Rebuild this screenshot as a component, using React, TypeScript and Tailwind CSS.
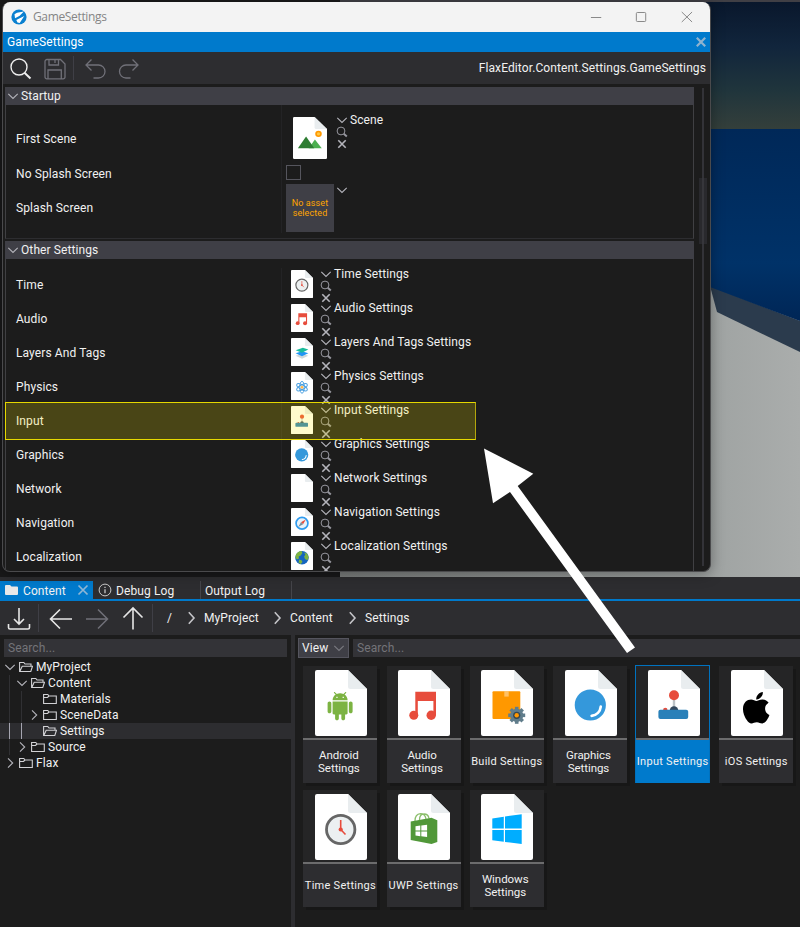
import React from "react";
import { FaApple } from "react-icons/fa";

type Kind =
  | "android" | "audio" | "build" | "graphics" | "input" | "ios" | "time" | "uwp" | "windows"
  | "layers" | "physics" | "network" | "navigation" | "localization" | "scene";

function Glyph({ kind }: { kind: Kind }) {
  switch (kind) {
    case "android":
      return (
        <path
          transform="translate(10.1 22) scale(1.25 1.18)"
          fill="#7cb342"
          d="M6 18c0 .55.45 1 1 1h1v3.5c0 .83.67 1.5 1.5 1.5s1.5-.67 1.5-1.5V19h2v3.5c0 .83.67 1.5 1.5 1.5s1.5-.67 1.5-1.5V19h1c.55 0 1-.45 1-1V8H6v10zM3.5 8C2.67 8 2 8.67 2 9.5v7c0 .83.67 1.5 1.5 1.5S5 17.33 5 16.5v-7C5 8.67 4.33 8 3.5 8zm17 0c-.83 0-1.5.67-1.5 1.5v7c0 .83.67 1.5 1.5 1.5s1.5-.67 1.5-1.5v-7c0-.83-.67-1.5-1.5-1.5zm-4.97-5.84l1.3-1.3c.2-.2.2-.51 0-.71-.2-.2-.51-.2-.71 0l-1.48 1.48C13.85 1.23 12.95 1 12 1c-.96 0-1.86.23-2.66.63L7.85.15c-.2-.2-.51-.2-.71 0-.2.2-.2.51 0 .71l1.31 1.31C6.97 3.26 6 5.01 6 7h12c0-1.99-.97-3.75-2.47-4.84zM10 5H9V4h1v1zm5 0h-1V4h1v1z"
        />
      );
    case "audio":
      return (
        <g fill="#e74c3c">
          <path d="M17.3 21.7H38V45h-2.6V31H19.8v14h-2.5z" />
          <circle cx="15.8" cy="45.2" r="4.5" />
          <circle cx="33.2" cy="45.2" r="4.7" />
        </g>
      );
    case "build":
      return (
        <g>
          <rect x="11.5" y="21.2" width="27.8" height="27.8" rx="1" fill="#ff9800" />
          <rect x="23.3" y="21.2" width="4.4" height="5.4" fill="#ffcc80" opacity=".8" />
          <g fill="#607d8b">
            <circle cx="35.7" cy="45.3" r="6.6" />
            <rect x="33.9" y="36.8" width="3.6" height="17" />
            <rect x="33.9" y="36.8" width="3.6" height="17" transform="rotate(45 35.7 45.3)" />
            <rect x="33.9" y="36.8" width="3.6" height="17" transform="rotate(90 35.7 45.3)" />
            <rect x="33.9" y="36.8" width="3.6" height="17" transform="rotate(135 35.7 45.3)" />
          </g>
          <circle cx="35.7" cy="45.3" r="3.6" fill="#37474f" />
          <circle cx="35.7" cy="45.3" r="2.2" fill="#ff9800" />
        </g>
      );
    case "graphics":
      return (
        <g>
          <circle cx="25.3" cy="35" r="15.6" fill="#3498db" />
          <path d="M35.8 36.500c-.6 5-4 8.800-9.200 9.400" fill="none" stroke="#fff" strokeWidth="2.600" strokeLinecap="round" />
        </g>
      );
    case "input":
      return (
        <g>
          <rect x="24.8" y="28" width="2.400" height="10" fill="#bdc3c7" />
          <circle cx="26" cy="25.2" r="5" fill="#e74c3c" />
          <circle cx="17.300" cy="40" r="2.200" fill="#e74c3c" />
          <circle cx="26" cy="40.500" r="4.300" fill="#34495e" />
          <rect x="10.400" y="39.700" width="29.800" height="9.400" rx="2" fill="#2980b9" />
        </g>
      );
    case "ios":
      return <FaApple x={7.200} y={19.700} size={36} color="#000" />;
    case "time":
      return (
        <g>
          <circle cx="25.700" cy="35.500" r="14.200" fill="#ecf0f1" stroke="#666" strokeWidth="2.800" />
          <path d="M25.700 26v9.500l4.800 5" fill="none" stroke="#e74c3c" strokeWidth="1.600" />
          <circle cx="25.700" cy="35.500" r="2.100" fill="#e74c3c" />
        </g>
      );
    case "uwp":
      return (
        <g>
          <path d="M17 27c0-4 2-7 5.500-7.300 3 0 5 2.300 5.500 5.300M21.500 26c0-4 2-6 4.500-6 3 0 4.600 1.700 5 4.500" fill="none" stroke="#8bbf6c" strokeWidth="1.300" />
          <path d="M12.700 27.500 33.500 23.700l5.800 2.500V48L33.500 50 12.700 46z" fill="#519839" />
          <path d="M17.500 32.300l4.800-.7v4.800h-4.800zM23.300 31.500l5.800-.8v5.700h-5.800zM17.500 37.400h4.800v4.800l-4.800-.700zM23.300 37.400h5.800v5.700l-5.800-.800z" fill="#fff" />
        </g>
      );
    case "windows":
      return (
        <path fill="#00adff" d="M11.300 24.400 22.800 22.700V34.600H11.300zM24 22.500 40.700 20.200V34.600H24zM11.300 36H22.800V47.800L11.300 46.200zM24 36H40.700V50L24 48z" />
      );
    case "layers":
      return (
        <g>
          <path d="M11 42l15-5 15 5-15 7z" fill="#cfd8dc" />
          <path d="M11 36l15-5 15 5-15 7z" fill="#2196f3" />
          <path d="M11 29l17-6 13 4-15 8z" fill="#1abc9c" />
        </g>
      );
    case "physics":
      return (
        <g fill="none" stroke="#4a9fe0" strokeWidth="2.300">
          <ellipse cx="26" cy="36" rx="5.500" ry="14" />
          <ellipse cx="26" cy="36" rx="5.500" ry="14" transform="rotate(60 26 36)" />
          <ellipse cx="26" cy="36" rx="5.500" ry="14" transform="rotate(120 26 36)" />
          <circle cx="26" cy="36" r="2.500" fill="#ffb74d" stroke="#ffb74d" />
        </g>
      );
    case "navigation":
      return (
        <g>
          <circle cx="26" cy="36" r="14" fill="#e8f2fa" stroke="#2f9cf0" strokeWidth="4" />
          <path d="M35 27 28.500 38.500 23.500 33.500z" fill="#e74c3c" />
          <path d="M17 45 28.500 38.500 23.500 33.500z" fill="#78909c" />
        </g>
      );
    case "localization":
      return (
        <g>
          <circle cx="26" cy="37" r="16" fill="#1565c0" />
          <path d="M12 29c3-5 7-8 13-8l2 5-4 6-5 2 1 5-5 2-4-5zM31 25l7 2 4 9-3 7-6-3-2-6 3-4zM19 41l6 2 2 4-4 5-5-3z" fill="#7cb342" />
        </g>
      );
    case "scene":
      return (
        <g>
          <circle cx="39" cy="26.500" r="5" fill="#ff9800" />
          <circle cx="39" cy="26.500" r="2.500" fill="#ffc947" />
          <path d="M24 49 33.500 35.500 44 49z" fill="#4caf50" />
          <path d="M7.500 49 20 30.500 32.500 49z" fill="#2e7d32" />
        </g>
      );
    default:
      return null;
  }
}

function FileIcon({ kind, className }: { kind: Kind; className: string }) {
  return (
    <svg viewBox="0 0 52 66" className={className} preserveAspectRatio="none">
      <path d="M2 0H33L52 19V64a2 2 0 0 1-2 2H2a2 2 0 0 1-2-2V2a2 2 0 0 1 2-2z" fill="#fff" />
      <path d="M33 0 52 19H35.500a2.500 2.500 0 0 1-2.500-2.500z" fill="#e9edef" />
      <Glyph kind={kind} />
    </svg>
  );
}

function Down({ className = "" }: { className?: string }) {
  return (
    <svg viewBox="0 0 12 12" className={`h-3 w-3 shrink-0 ${className}`} fill="none" stroke="#b4b4bb" strokeWidth="1.1">
      <path d="M1.300 3.800 6 8.500l4.700-4.700" />
    </svg>
  );
}

function Right() {
  return (
    <svg viewBox="0 0 12 12" className="h-3 w-3 shrink-0" fill="none" stroke="#b4b4bb" strokeWidth="1.1">
      <path d="M4 1.300 8.700 6 4 10.700" />
    </svg>
  );
}

function Tools({ only = false }: { only?: boolean }) {
  return (
    <div className="flex w-3 shrink-0 flex-col">
      <Down />
      {!only && (
        <>
          <svg viewBox="0 0 12 12" className="h-3 w-3 shrink-0" fill="none" stroke="#96969e">
            <circle cx="5" cy="5" r="3.900" strokeWidth="1" />
            <path d="M7.800 7.800 10.800 10.500" strokeWidth="1.900" />
          </svg>
          <svg viewBox="0 0 12 12" className="h-3 w-3 shrink-0" fill="none" stroke="#b4b4bb" strokeWidth="1.600">
            <path d="M2.300 2.300l7.400 7.400M9.700 2.300 2.300 9.700" />
          </svg>
        </>
      )}
    </div>
  );
}

function GroupHeader({ title }: { title: string }) {
  return (
    <div className="flex h-[18px] items-center gap-[2px] bg-[#3f3f46] pl-0.5">
      <Down />
      <span>{title}</span>
    </div>
  );
}

const settings: { label: string; asset: string; kind: Kind }[] = [
  { label: "Time", asset: "Time Settings", kind: "time" },
  { label: "Audio", asset: "Audio Settings", kind: "audio" },
  { label: "Layers And Tags", asset: "Layers And Tags Settings", kind: "layers" },
  { label: "Physics", asset: "Physics Settings", kind: "physics" },
  { label: "Input", asset: "Input Settings", kind: "input" },
  { label: "Graphics", asset: "Graphics Settings", kind: "graphics" },
  { label: "Network", asset: "Network Settings", kind: "network" },
  { label: "Navigation", asset: "Navigation Settings", kind: "navigation" },
  { label: "Localization", asset: "Localization Settings", kind: "localization" },
];

function Highlight() {
  return (
    <div className="absolute -left-px -top-px z-10 h-[38px] w-[471px] border border-[#e6d800] border-r-[#b3a60c] bg-[#ffeb00]/20" />
  );
}

function SettingsWindow() {
  return (
    <div className="absolute left-[2px] top-[2px] flex h-[570px] w-[709px] flex-col overflow-hidden rounded-lg border border-t-0 border-[#4a4a4c] bg-[#1c1c1c] shadow-[0_2px_14px_rgba(0,0,0,0.35)]">
      <div className="flex h-[30px] shrink-0 items-center bg-[#f3f3f3] pl-2">
        <svg viewBox="0 0 16 16" className="mb-px h-4 w-4">
          <circle cx="8" cy="8" r="7.600" fill="#0a80d0" />
          <path d="M3.500 5.200 6 3.800 12.800 2.500 8.700 6.800 4 9.300zM5.300 11 13.300 6.900 8.700 13.900 6.500 13.400z" fill="#fff" />
        </svg>
        <span className="ml-1.5 font-['Open_Sans',sans-serif] text-[12px] tracking-[-0.35px] text-[#858585]">GameSettings</span>
        <svg viewBox="0 0 110 12" className="ml-auto mr-[17px] h-3 w-[103px]" preserveAspectRatio="none" fill="none" stroke="#858585">
          <path d="M1 6.500H12" />
          <rect x="49.500" y="1.500" width="10" height="9" rx="1" />
          <path d="M98 1l11 10M109 1 98 11" />
        </svg>
      </div>
      <div className="flex h-5 shrink-0 items-center justify-between bg-[#007acc] pl-1 pr-[3px] text-white">
        <span>GameSettings</span>
        <svg viewBox="0 0 12 12" className="h-3 w-3" stroke="#8fb3cf" strokeWidth="2.200">
          <path d="M1.800 1.800l8.400 8.400M10.200 1.800 1.800 10.200" />
        </svg>
      </div>
      <div className="flex h-8 shrink-0 items-center bg-[#2d2d30] pl-1.5 pr-1">
        <svg viewBox="0 0 24 24" className="h-6 w-6" fill="none" stroke="#eee" strokeWidth="1.400">
          <circle cx="10" cy="11" r="8" />
          <path d="M15.500 16.800 21.500 22.500" strokeWidth="2" />
        </svg>
        <svg viewBox="0 0 24 24" className="ml-2.5 h-6 w-6" fill="none" stroke="#707078" strokeWidth="1.300">
          <path d="M4 3.500H17.500L22 8V21a1.800 1.800 0 0 1-1.800 1.800H3.800A1.800 1.800 0 0 1 2 21V5.500a2 2 0 0 1 2-2zM6 3.500V9H15.500V3.500M5 22.500V14H18.300V22.500" />
          <path d="M12 3.500V7" />
        </svg>
        <div className="ml-1.5 h-6 w-px bg-[#3f3f46]" />
        <svg viewBox="0 0 24 24" className="ml-2.5 h-6 w-6" fill="none" stroke="#707078" strokeWidth="1.300">
          <path d="M7.500 3.500 2 9 7.500 14.500M2.500 9H14.500a6.500 6.500 0 0 1 0 13H9.500" />
        </svg>
        <svg viewBox="0 0 24 24" className="ml-2.5 h-6 w-6" fill="none" stroke="#707078" strokeWidth="1.300">
          <path d="M14.500 3.500 20 9 14.500 14.500M19.500 9H8a6.500 6.500 0 0 0 0 13h4.500" />
        </svg>
        <span className="ml-auto">FlaxEditor.Content.Settings.GameSettings</span>
      </div>
      <div className="flex min-h-0 flex-1">
        <div className="ml-0.5 w-[689px] pt-[3px]">
          <GroupHeader title="Startup" />
          <div className="flex h-[134px] border border-t-0 border-[#404043] border-b-[#2d2d30]">
            <div className="flex h-[128px] w-[276px] flex-col border-r border-[#232325] pl-2.5">
              <span className="mt-[25px] leading-[18px]">First Scene</span>
              <span className="mt-[17px] leading-[18px]">No Splash Screen</span>
              <span className="mt-4 leading-[18px]">Splash Screen</span>
            </div>
            <div className="pl-1">
              <div className="flex h-[58px] pt-[9px]">
                <FileIcon kind="scene" className="ml-[7px] mt-[3px] h-[42px] w-[34px]" />
                <div className="ml-[9px] flex">
                  <Tools />
                  <span className="ml-0.5 h-[11px] leading-[12px]">Scene</span>
                </div>
              </div>
              <div className="mt-[2px] h-[15px] w-[15px] border border-[#55555d]" />
              <div className="mt-1 flex">
                <div className="flex h-12 w-12 items-center justify-center bg-[#3f3f46] text-center text-[9px] leading-[10px] tracking-[0.1px] text-[#ffa500]">
                  No asset<br />selected
                </div>
                <div className="ml-[2px]"><Tools only /></div>
              </div>
            </div>
          </div>
          <div className="h-0.5" />
          <GroupHeader title="Other Settings" />
          <div className="h-[330px] border-x border-[#404043] pt-[9px]">
            {settings.map((s) => (
              <div key={s.label} className="relative flex h-[34px]">
                {s.label === "Input" && (
                  <div className="absolute -top-px left-0"><Highlight /></div>
                )}
                <div className="flex w-[276px] items-center border-r border-[#232325] pl-2.5">{s.label}</div>
                <FileIcon kind={s.kind} className="ml-[9px] mt-[2px] h-7 w-[22px]" />
                <div className="ml-[7px] flex">
                  <Tools />
                  <span className="ml-0.5 leading-[12px]">{s.asset}</span>
                </div>
              </div>
            ))}
          </div>
        </div>
        <div className="ml-[5px] flex w-2 flex-col items-center pt-1">
          <div className="h-[90px] w-0.5 bg-[#333338]" />
          <div className="flex h-[66px] w-2 justify-center bg-[#29292d]"><div className="h-full w-0.5 bg-[#36363b]" /></div>
          <div className="h-[322px] w-0.5 bg-[#333338]" />
        </div>
      </div>
    </div>
  );
}

function Viewport() {
  return (
    <svg viewBox="0 0 460 577" className="ml-[340px] h-[577px] w-[460px]">
      <defs>
        <linearGradient id="sky" x1="0" y1="0" x2="0" y2="1">
          <stop offset="0" stopColor="#09172c" />
          <stop offset=".35" stopColor="#11253c" />
          <stop offset=".7" stopColor="#20353c" />
          <stop offset="1" stopColor="#343f3b" />
        </linearGradient>
        <linearGradient id="wall" x1="0" y1="0" x2="0" y2="1">
          <stop offset="0" stopColor="#002858" />
          <stop offset=".7" stopColor="#003268" />
          <stop offset="1" stopColor="#002656" />
        </linearGradient>
        <linearGradient id="floor" x1="0" y1="0" x2="1" y2="0">
          <stop offset="0" stopColor="#7b7e7d" />
          <stop offset=".8" stopColor="#9fa3a2" />
          <stop offset="1" stopColor="#aaadac" />
        </linearGradient>
      </defs>
      <rect width="460" height="577" fill="url(#floor)" />
      <rect width="460" height="2" fill="#403f45" />
      <rect x="350" y="2" width="110" height="127" fill="url(#sky)" />
      <path d="M370 286 460 321V352L377 312z" fill="#2b3b4d" />
      <path d="M360 129H460V321L370 287z" fill="url(#wall)" />
    </svg>
  );
}

function Folder({ open = false }: { open?: boolean }) {
  return (
    <svg viewBox="0 0 14 12" className="h-3 w-3.5 shrink-0" fill="none" stroke="#d2d2d5" strokeWidth="1.100">
      {open ? (
        <path d="M.6 10.500V1.500H4.800L6 3H12V5.200M.8 10.500 3.200 5.200H13.500L11.800 10.500z" />
      ) : (
        <path d="M.6 10.500V1.500H4.800L6 3H13.300V10.500zM.6 4.500H4.500L6 3" />
      )}
    </svg>
  );
}

const tree: { name: string; pad: string; arrow?: "down" | "right"; open?: boolean; guides: number }[] = [
  { name: "MyProject", pad: "pl-1", arrow: "down", open: true, guides: 0 },
  { name: "Content", pad: "pl-4", arrow: "down", open: true, guides: 1 },
  { name: "Materials", pad: "pl-7", guides: 2 },
  { name: "SceneData", pad: "pl-7", arrow: "right", guides: 2 },
  { name: "Settings", pad: "pl-7", open: true, guides: 2 },
  { name: "Source", pad: "pl-4", arrow: "right", guides: 1 },
  { name: "Flax", pad: "pl-1", arrow: "right", guides: 0 },
];

const assets: { name: string; kind: Kind; wrap?: boolean }[] = [
  { name: "Android Settings", kind: "android", wrap: true },
  { name: "Audio Settings", kind: "audio", wrap: true },
  { name: "Build Settings", kind: "build" },
  { name: "Graphics Settings", kind: "graphics", wrap: true },
  { name: "Input Settings", kind: "input" },
  { name: "iOS Settings", kind: "ios" },
  { name: "Time Settings", kind: "time" },
  { name: "UWP Settings", kind: "uwp" },
  { name: "Windows Settings", kind: "windows", wrap: true },
];

function Tile({ name, kind, wrap }: { name: string; kind: Kind; wrap?: boolean }) {
  const selected = kind === "input";
  return (
    <div
      className={
        selected
          ? "-ml-px -mt-px flex h-[118px] w-[75px] flex-col bg-[#0072bf] px-px pt-px"
          : "flex h-[117px] w-[74px] flex-col bg-[#252526] shadow-[3px_3px_0_#171717]"
      }
    >
      <div className="flex h-[72px] shrink-0 bg-[#252526] pt-1">
        <FileIcon kind={kind} className="ml-[11.600px] h-[66px] w-[52px] shrink-0" />
      </div>
      <div className="h-[2px] shrink-0 bg-[#6c6c6d]" />
      <div className={`flex flex-1 items-center justify-center text-center leading-[13px] ${selected ? "bg-[#007acc]" : "bg-[#2d2d30]"}`}>
        {wrap ? (
          <span className="mr-[3px] w-14 text-[11.500px] tracking-[-0.050px]">{name}</span>
        ) : (
          <span className="whitespace-nowrap text-[11px] tracking-[0.270px]">{name}</span>
        )}
      </div>
    </div>
  );
}

function Crumb({ name, className }: { name: string; className: string }) {
  return (
    <>
      <svg viewBox="0 0 8 14" className="h-3.5 w-2" fill="none" stroke="#c4c4c8" strokeWidth="1.600">
        <path d="M.8 1.200 6 7 .8 12.800" />
      </svg>
      <span className={className}>{name}</span>
    </>
  );
}

function ContentPanel() {
  return (
    <div className="flex h-[350px] flex-col bg-[#2d2d30]">
      <div className="flex h-6 items-end border-b-2 border-[#007acc] pt-1">
        <div className="flex h-[18px] w-[93px] items-center bg-[#007acc] pl-[5px]">
          <svg viewBox="0 0 13 12" className="h-3 w-[13px]" fill="#e8e8e8">
            <path d="M0 2a1 1 0 0 1 1-1H5L6.500 2.500H12a1 1 0 0 1 1 1V10a1 1 0 0 1-1 1H1a1 1 0 0 1-1-1z" />
          </svg>
          <span className="ml-[5px] pt-[2px] leading-[18px]">Content</span>
          <svg viewBox="0 0 12 12" className="ml-auto mr-1 h-3 w-3" stroke="#8fb6d4" strokeWidth="1.700">
            <path d="M1.500 1.500l9 9M10.500 1.500l-9 9" />
          </svg>
        </div>
        <div className="flex h-[18px] w-[108px] items-center border-r border-[#45454a] pl-[5px]">
          <svg viewBox="0 0 14 14" className="h-3.5 w-3.5" fill="none" stroke="#c8c8c8">
            <circle cx="7" cy="7" r="5.900" />
            <path d="M7 6.200V10.200M7 3.700V5" strokeWidth="1.300" />
          </svg>
          <span className="ml-1 mt-px">Debug Log</span>
        </div>
        <div className="flex h-[18px] w-[91px] items-center border-r border-[#45454a] pl-1 pt-px">Output Log</div>
      </div>
      <div className="flex h-[34px] shrink-0 items-center">
        <svg viewBox="0 0 24 24" className="ml-[7px] h-6 w-6" fill="none" stroke="#e6e6e6" strokeWidth="1.600">
          <path d="M12 2V18M7 13l5 5 5-5M1.500 18V21.500Q1.500 23 3 23H21Q22.500 23 22.500 21.500V18" />
        </svg>
        <div className="ml-[7px] h-7 w-px bg-[#3f3f46]" />
        <svg viewBox="0 0 24 24" className="ml-2.5 h-6 w-6" fill="none" stroke="#e6e6e6" strokeWidth="1.600">
          <path d="M1.500 13H23M11 3.500 1.500 13 11 22.500" />
        </svg>
        <svg viewBox="0 0 24 24" className="ml-3 h-6 w-6" fill="none" stroke="#707078" strokeWidth="1.500">
          <path d="M1 13H22.500M13 3.500 22.500 13 13 22.500" />
        </svg>
        <svg viewBox="0 0 24 24" className="ml-3 h-6 w-6" fill="none" stroke="#e6e6e6" strokeWidth="1.600">
          <path d="M12 2V23.500M2.500 11.500 12 2l9.500 9.500" />
        </svg>
        <div className="ml-[7px] h-7 w-px bg-[#3f3f46]" />
        <span className="ml-3.5 w-[21px]">/</span>
        <Crumb name="MyProject" className="ml-2 w-[70px]" />
        <Crumb name="Content" className="ml-2 w-[59px]" />
        <Crumb name="Settings" className="ml-2" />
      </div>
      <div className="flex min-h-0 flex-1 bg-[#1c1c1c]">
        <div className="w-[291px] pt-1">
          <div className="mx-1 h-[18px] bg-[#333337] pl-1 leading-[18px] text-[#747479]">Search...</div>
          <div className="mt-[2px]">
            {tree.map((n) => (
              <div key={n.name} className={`relative flex h-4 items-center ${n.pad} ${n.name === "Settings" ? "bg-[#2d2d30]" : ""}`}>
                {n.guides > 0 && <div className={`absolute left-[9px] h-4 w-px ${n.name === "Settings" ? "bg-[#a5a5b0]" : "bg-[#303033]"}`} />}
                {n.guides > 1 && <div className={`absolute left-[21px] h-4 w-px ${n.name === "Settings" ? "bg-[#a5a5b0]" : "bg-[#303033]"}`} />}
                <div className="w-[15px]">{n.arrow === "down" ? <Down /> : n.arrow === "right" ? <Right /> : null}</div>
                <Folder open={n.open} />
                <span className="ml-[3px]">{n.name}</span>
              </div>
            ))}
          </div>
        </div>
        <div className="w-1 bg-[#2d2d30]" />
        <div className="min-w-0 flex-1 pl-[3px] pt-[3px]">
          <div className="flex h-5">
            <div className="flex h-5 w-[51px] items-center justify-between border border-[#55555e] bg-[#3f3f46] pl-[3px] pr-[3px]">
              <span>View</span>
              <Down className="opacity-50" />
            </div>
            <div className="ml-1 mt-px h-[18px] flex-1 bg-[#333337] pl-1 leading-[18px] text-[#747479]">Search...</div>
          </div>
          <div className="ml-[5.400px] mt-2 flex w-[500px] flex-wrap gap-x-[9.200px] gap-y-[7px]">
            {assets.map((a) => <Tile key={a.name} {...a} />)}
          </div>
        </div>
      </div>
    </div>
  );
}

export default function App() {
  return (
    <div className="relative h-[927px] w-[800px] overflow-hidden bg-[#1c1c1c] font-[Roboto,sans-serif] text-[12px] leading-[18px] tracking-[0.1px] text-[#f1f1f1]">
      <div className="relative h-[577px] bg-[#19191a]">
        <Viewport />
        <SettingsWindow />
      </div>
      <ContentPanel />
      <svg viewBox="0 0 800 927" className="pointer-events-none absolute inset-0 h-[927px] w-[800px]">
        <path d="M484 448.500 533.300 473.700 517.700 486 635 647.500 627 653 510 492 493 503.300z" fill="#fff" />
      </svg>
    </div>
  );
}
